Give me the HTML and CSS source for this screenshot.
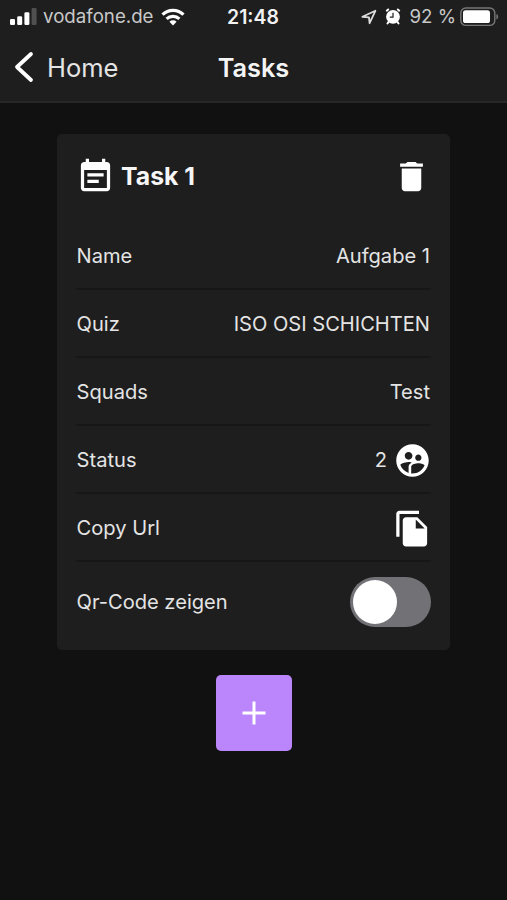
FILE: index.html
```html
<!DOCTYPE html>
<html lang="de">
<head>
<meta charset="utf-8">
<meta name="viewport" content="width=device-width, initial-scale=1">
<title>Tasks</title>
<link rel="stylesheet" href="styles.css">
</head>
<body>
<header class="header">
  <div class="status">
    <div class="status-left">
      <svg class="signal" width="27" height="17" viewBox="0 0 27 17"><rect x="0" y="11" width="5" height="6" rx="1.3"/><rect x="7.2" y="8.3" width="5" height="8.7" rx="1.3"/><rect x="14.4" y="4.2" width="5" height="12.8" rx="1.3"/><rect class="dim" x="21.6" y="0" width="5" height="17" rx="1.3"/></svg>
      <span class="carrier">vodafone.de</span>
      <svg class="wifi" width="24" height="18" viewBox="0 0 24 18"><g fill="none" stroke="#fff" stroke-width="3.2"><path d="M1.5 6.6a15 15 0 0 1 21 0"/><path d="M5.6 10.9a9.2 9.2 0 0 1 12.8 0"/></g><path d="M12 17.5l-3.6-3.7a5.2 5.2 0 0 1 7.2 0z"/></svg>
    </div>
    <span class="clock">21:48</span>
    <div class="status-right">
      <svg class="location" width="16" height="16" viewBox="0 0 16 16"><path d="M1.4 7.8L14.4 1.8 8.6 14.2 8 8.4z" fill="none" stroke="#ddd" stroke-width="1.8" stroke-linejoin="round"/></svg>
      <svg class="alarm" width="16" height="17" viewBox="0 0 16 17"><circle cx="8" cy="8.8" r="6.9"/><g fill="none" stroke="#fff" stroke-width="2" stroke-linecap="round"><path d="M1.8 2.7l1.4-1.2M14.2 2.7l-1.4-1.2M3.5 14l-1 1.5M12.5 14l1 1.5"/></g><path d="M8 4.8v4.4H4.8" fill="none" stroke="#1e1e1e" stroke-width="1.2"/></svg>
      <span class="percent">92 %</span>
      <svg class="battery" width="39" height="20" viewBox="0 0 39 20"><rect x=".8" y="1" width="34" height="17.4" rx="5" fill="none" stroke="#777" stroke-width="1.4"/><rect x="3" y="3.3" width="27" height="12.8" rx="2.6"/><path d="M36.4 7v5.6q1.8-.8 1.8-2.8T36.4 7z" fill="#777"/></svg>
    </div>
  </div>
  <nav class="nav">
    <a class="back"><svg width="20" height="32" viewBox="0 0 20 32"><path d="M17 3L3 16l14 13" fill="none" stroke="#fff" stroke-width="3.8" stroke-linecap="round" stroke-linejoin="round"/></svg><span>Home</span></a>
    <h1 class="title">Tasks</h1>
  </nav>
</header>
<main class="content">
  <section class="card">
    <div class="card-head">
      <svg class="icon" viewBox="0 0 24 24"><path d="M17 10H7v2h10v-2zm2-7h-1V1h-2v2H8V1H6v2H5c-1.11 0-1.99.9-1.99 2L3 19c0 1.1.89 2 2 2h14c1.1 0 2-.9 2-2V5c0-1.1-.9-2-2-2zm0 16H5V8h14v11zm-5-5H7v2h7v-2z"/></svg>
      <h2 class="card-title">Task 1</h2>
      <svg class="icon trash" viewBox="0 0 24 24"><path d="M6 19c0 1.1.9 2 2 2h8c1.1 0 2-.9 2-2V7H6v12zM19 4h-3.5l-1-1h-5l-1 1H5v2h14V4z"/></svg>
    </div>
    <div class="row"><span>Name</span><span class="value">Aufgabe 1</span></div>
    <div class="row"><span>Quiz</span><span class="value">ISO OSI SCHICHTEN</span></div>
    <div class="row"><span>Squads</span><span class="value">Test</span></div>
    <div class="row"><span>Status</span><span class="value count">2</span><svg class="icon" viewBox="0 0 24 24"><path d="M11.99 2c-5.52 0-10 4.48-10 10s4.48 10 10 10 10-4.48 10-10-4.48-10-10-10zm3.61 6.34c1.07 0 1.93.86 1.93 1.93 0 1.07-.86 1.93-1.93 1.93-1.07 0-1.93-.86-1.93-1.93-.01-1.07.86-1.93 1.93-1.93zm-6-1.58c1.3 0 2.36 1.06 2.36 2.36 0 1.3-1.06 2.36-2.36 2.36s-2.36-1.06-2.36-2.36c0-1.31 1.05-2.36 2.36-2.36zm0 9.13v3.75c-2.4-.75-4.3-2.6-5.14-4.96 1.05-1.12 3.67-1.69 5.14-1.69.53 0 1.2.08 1.9.22-1.64.87-1.9 2.02-1.9 2.68zM11.99 20c-.27 0-.53-.01-.79-.04v-4.07c0-1.42 2.94-2.13 4.4-2.13 1.07 0 2.92.39 3.84 1.15-1.17 2.97-4.06 5.09-7.45 5.09z"/></svg></div>
    <div class="row"><span>Copy Url</span><svg class="icon end" viewBox="0 0 24 24"><path d="M16 1H4c-1.1 0-2 .9-2 2v14h2V3h12V1zm-1 4l6 6v10c0 1.1-.9 2-2 2H7.99C6.89 23 6 22.1 6 21V7c0-1.1.89-2 1.99-2h7zm-1 7h5.5L14 6.5V12z"/></svg></div>
    <div class="row last"><span>Qr-Code zeigen</span><span class="toggle"><span class="knob"></span></span></div>
  </section>
  <button class="add" aria-label="Add"><svg width="24" height="24" viewBox="0 0 24 24"><path d="M12 .5v23M.5 12h23" stroke="#fff" stroke-width="3"/></svg></button>
</main>
</body>
</html>
```
FILE: styles.css
```css
* { box-sizing: border-box; }
body {
  margin: 0;
  height: 900px;
  background: #111;
  color: #e4e4e4;
  font-family: Inter, "Liberation Sans", sans-serif;
  font-size: 20px;
  overflow: hidden;
}
svg { display: block; flex: none; fill: #fff; }
span, h1, h2 { white-space: nowrap; }
.header {
  height: 103px;
  background: #1e1e1e;
  border-bottom: 2px solid #272727;
}
.status {
  display: grid;
  grid-template-columns: 1fr auto 1fr;
  align-items: center;
  height: 33px;
  padding: 0 9px 0 10px;
  font-size: 18.7px;
}
.status-left, .status-right { display: flex; align-items: center; }
.status-right { justify-content: flex-end; margin-right: -1px; }
.signal .dim { fill: #505050; }
.carrier { margin-left: 6px; color: #c8c8c8; }
.wifi { margin-left: 7px; }
.clock { margin-right: 2px; color: #f2f2f2; font-size: 19.4px; font-weight: 600; }
.alarm { margin-left: 8px; }
.percent { margin-left: 8px; color: #c8c8c8; }
.battery { margin-left: 4px; }
.nav {
  display: grid;
  grid-template-columns: 1fr auto 1fr;
  align-items: center;
  height: 67px;
  padding: 1px 14px 0;
}
.back { display: flex; align-items: center; gap: 13px; font-size: 25.5px; }
.title { margin: 0; color: #f4f4f4; font-size: 25.3px; font-weight: 600; }
.content { display: flex; flex-direction: column; align-items: center; padding-top: 31px; }
.card {
  width: 393px;
  height: 516px;
  padding: 0 19px;
  border-radius: 5px;
  background: #1e1e1e;
}
.card-head { display: flex; align-items: center; height: 88px; padding-bottom: 4px; }
.icon { width: 39px; height: 39px; }
.card-title { margin: 0 0 0 6px; color: #f6f6f6; font-size: 24.8px; font-weight: 700; }
.trash { margin-left: auto; }
.row {
  display: flex;
  align-items: center;
  height: 68px;
  padding-top: 2px;
  border-bottom: 2px solid #171717;
  font-size: 20.1px;
  text-indent: 0.6px;
}
.row .icon { margin-right: -1px; }
.value { margin-left: auto; padding-right: 1px; }
.count { padding-right: 6px; }
.row .end { margin-left: auto; }
.last { height: 78px; border-bottom: 0; }
.toggle {
  display: flex;
  width: 81px;
  height: 50px;
  margin-left: auto;
  padding: 3px;
  border-radius: 25px;
  background: #727276;
}
.knob { width: 44px; height: 44px; border-radius: 50%; background: #fff; }
.add {
  display: grid;
  place-items: center;
  width: 76px;
  height: 76px;
  margin-top: 25px;
  padding: 0;
  border: 0;
  border-radius: 5px;
  background: #bb86fc;
}
```
